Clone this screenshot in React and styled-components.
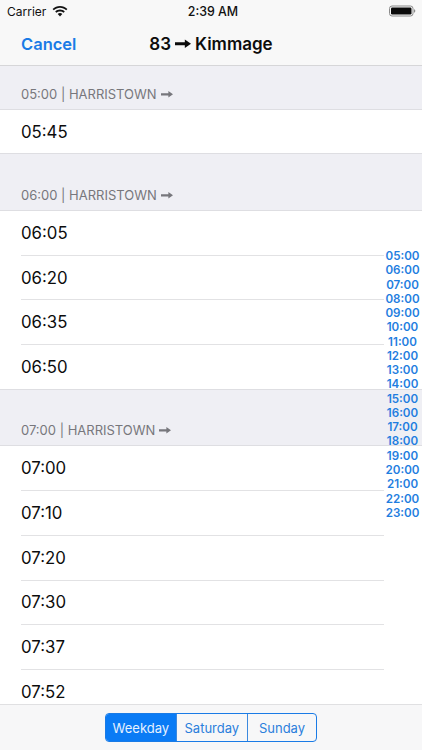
import React from 'react';
import styled, { createGlobalStyle } from 'styled-components';

const Global = createGlobalStyle`
  html, body { margin: 0; padding: 0; background: #fff; }
  body { font-family: Inter, "Liberation Sans", sans-serif; -webkit-font-smoothing: antialiased; }
`;

const Screen = styled.div`
  position: relative;
  width: 422px;
  height: 750px;
  display: flex;
  flex-direction: column;
  overflow: hidden;
  background: #fff;
`;

const Top = styled.header`
  flex: none;
  height: 66px;
  box-sizing: border-box;
  background: #f8f8f8;
  border-bottom: 1px solid #d6d6d8;
`;

const StatusBar = styled.div`
  height: 22px;
  display: grid;
  grid-template-columns: 1fr auto 1fr;
  align-items: center;
  padding: 0 6px 0 7px;
  font-size: 12px;
  color: #111;
`;

const Carrier = styled.div`
  display: flex;
  align-items: center;
  gap: 6px;
`;

const Clock = styled.div`
  font-weight: 500;
  font-size: 12.4px;
  margin-left: 3px;
`;

const Battery = styled.div`
  justify-self: end;
  display: flex;
  align-items: center;
`;

const NavBar = styled.div`
  height: 43px;
  display: grid;
  grid-template-columns: 1fr auto 1fr;
  align-items: center;
  padding: 0 21px;
`;

const Cancel = styled.div`
  color: #1a7be6;
  font-size: 16.5px;
  font-weight: 600;
`;

const Title = styled.div`
  display: flex;
  align-items: center;
  gap: 4px;
  font-size: 17px;
  font-weight: 600;
  color: #0c0c0c;
`;

const List = styled.main`
  flex: 1;
  min-height: 0;
  overflow: hidden;
`;

const SectionHeader = styled.div`
  height: ${p => p.$height}px;
  box-sizing: border-box;
  display: flex;
  align-items: flex-end;
  padding: 0 0 6px 21px;
  background: #efeff4;
  border-bottom: 1px solid #dedee2;
  color: #77777c;
  font-size: 13px;
  line-height: 17px;
`;

const HeaderText = styled.div`
  display: flex;
  align-items: center;
  gap: 4px;
`;

const Rows = styled.div`
  background: #fff;
  border-bottom: 1px solid #dedee2;
`;

const Row = styled.div`
  height: ${p => (p.$last ? 43.4 : 44.8)}px;
  margin: 0 38px 0 21px;
  box-sizing: border-box;
  display: flex;
  align-items: center;
  font-size: 16.8px;
  color: #0c0c0c;
  border-bottom: ${p => (p.$last ? 'none' : '1px solid #e2e2e4')};
`;

const Index = styled.nav`
  position: absolute;
  top: 249px;
  right: 2px;
  width: 35px;
  display: flex;
  flex-direction: column;
  align-items: center;
  font-size: 11.6px;
  font-weight: 600;
  line-height: 14.27px;
  color: #1f7ee0;
`;

const Bottom = styled.footer`
  flex: none;
  height: 46px;
  box-sizing: border-box;
  background: #f7f7f8;
  border-top: 1px solid #e0e0e2;
  display: flex;
  align-items: center;
  justify-content: center;
`;

const Segments = styled.div`
  display: flex;
  height: 29.5px;
  box-sizing: border-box;
  border: 1px solid #1a7be6;
  border-radius: 4px;
  overflow: hidden;
`;

const Segment = styled.div`
  width: ${p => p.$width}px;
  box-sizing: border-box;
  display: flex;
  align-items: center;
  justify-content: center;
  font-size: 13px;
  color: ${p => (p.$active ? '#e6f1ff' : '#2b7fdc')};
  background: ${p => (p.$active ? '#0a7bf5' : 'transparent')};
  & + & { border-left: 1px solid #3c89de; }
`;

const Arrow = ({ size = 12, color = '#77777c' }) => (
  <svg width={size} height={size * 0.72} viewBox="0 0 14 10" fill={color}>
    <path d="M0 3.7h8.6V1.2L14 5l-5.4 3.8V6.3H0z" />
  </svg>
);

const Wifi = () => (
  <svg width="16" height="12" viewBox="0 0 16 12" fill="#111">
    <path d="M8 1C5.2 1 2.6 2 .6 3.9l1.2 1.3C3.5 3.7 5.7 2.8 8 2.8s4.5.9 6.2 2.4l1.2-1.3C13.4 2 10.8 1 8 1z" />
    <path d="M8 4.6c-1.8 0-3.5.7-4.8 1.9l1.2 1.3C5.4 6.9 6.7 6.4 8 6.4s2.6.5 3.6 1.4l1.2-1.3C11.5 5.3 9.8 4.6 8 4.6z" />
    <path d="M8 8c-.9 0-1.7.3-2.3.9L8 11.4l2.3-2.5C9.7 8.3 8.9 8 8 8z" />
  </svg>
);

const BatteryIcon = () => (
  <svg width="27" height="12" viewBox="0 0 27 12">
    <rect x="0.5" y="1" width="23.5" height="10" rx="2.5" fill="none" stroke="#8a8a8a" />
    <rect x="2" y="2.5" width="20.5" height="7" rx="1.2" fill="#0a0a0a" />
    <path d="M25 4.3c.8.2 1.3.8 1.3 1.7s-.5 1.5-1.3 1.7z" fill="#8a8a8a" />
  </svg>
);

const sections = [
  { label: '05:00', height: 44, times: ['05:45'] },
  { label: '06:00', height: 56.5, times: ['06:05', '06:20', '06:35', '06:50'] },
  { label: '07:00', height: 56.5, times: ['07:00', '07:10', '07:20', '07:30', '07:37', '07:52'] },
];

const hours = Array.from({ length: 19 }, (_, i) => `${String(i + 5).padStart(2, '0')}:00`);

export default function App() {
  return (
    <Screen>
      <Global />
      <Top>
        <StatusBar>
          <Carrier>Carrier <Wifi /></Carrier>
          <Clock>2:39 AM</Clock>
          <Battery><BatteryIcon /></Battery>
        </StatusBar>
        <NavBar>
          <Cancel>Cancel</Cancel>
          <Title>83 <Arrow size={16} color="#0c0c0c" /> Kimmage</Title>
        </NavBar>
      </Top>
      <List>
        {sections.map(s => (
          <React.Fragment key={s.label}>
            <SectionHeader $height={s.height}>
              <HeaderText>{s.label} | HARRISTOWN <Arrow /></HeaderText>
            </SectionHeader>
            <Rows>
              {s.times.map((t, i) => (
                <Row key={t} $last={i === s.times.length - 1}>{t}</Row>
              ))}
            </Rows>
          </React.Fragment>
        ))}
      </List>
      <Index>
        {hours.map(h => <span key={h}>{h}</span>)}
      </Index>
      <Bottom>
        <Segments>
          <Segment $width={70} $active>Weekday</Segment>
          <Segment $width={71}>Saturday</Segment>
          <Segment $width={69.3}>Sunday</Segment>
        </Segments>
      </Bottom>
    </Screen>
  );
}
